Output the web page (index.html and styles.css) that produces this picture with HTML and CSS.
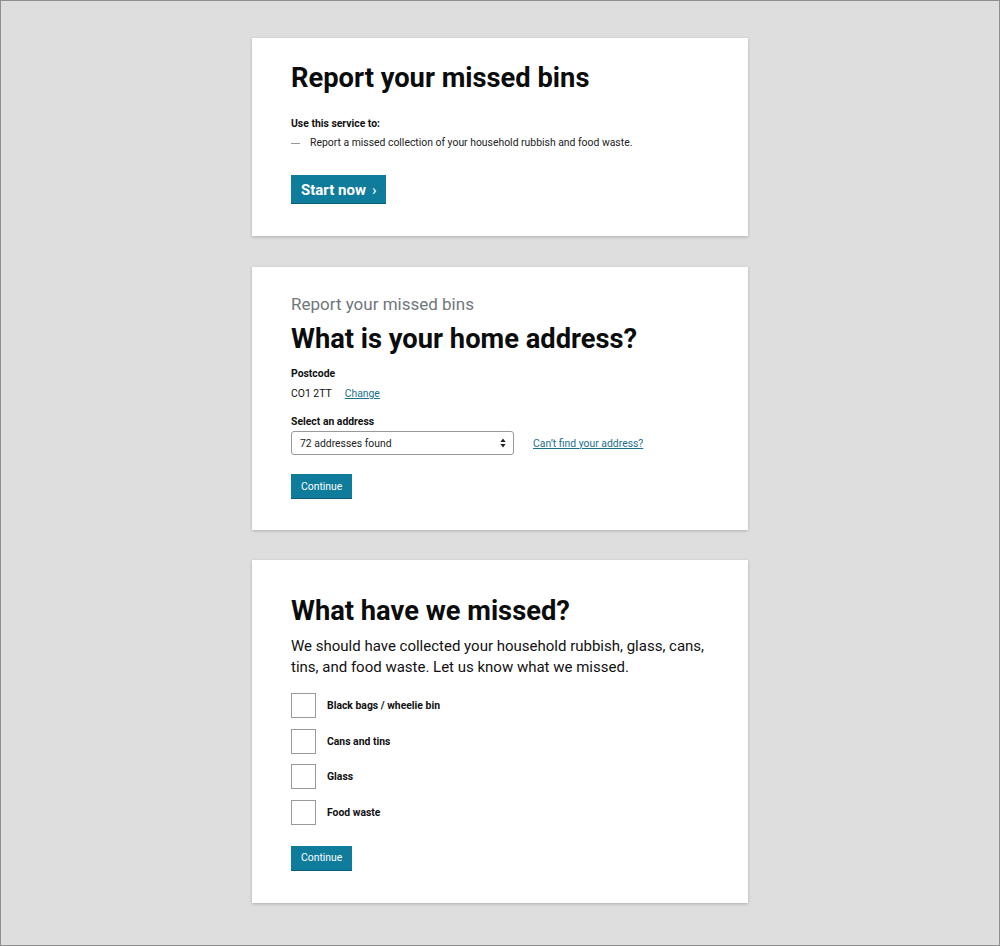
FILE: index.html
```html
<!DOCTYPE html>
<html lang="en">
<head>
<meta charset="utf-8">
<title>Report your missed bins</title>
<link rel="stylesheet" href="styles.css">
</head>
<body>
<div class="frame">
  <section class="card card-start">
    <h1 class="title">Report your missed bins</h1>
    <p class="lead-label">Use this service to:</p>
    <ul class="dash-list">
      <li>Report a missed collection of your household rubbish and food waste.</li>
    </ul>
    <a class="btn btn-start" href="#">Start now <span class="chev">&#x203A;</span></a>
  </section>

  <section class="card card-address">
    <p class="caption">Report your missed bins</p>
    <h1 class="title title-sm">What is your home address?</h1>
    <p class="label">Postcode</p>
    <p class="postcode"><span>CO1 2TT</span><a class="link" href="#">Change</a></p>
    <p class="label label-select">Select an address</p>
    <div class="select-row">
      <div class="select">
        <span>72 addresses found</span>
        <svg class="arrows" width="6" height="10" viewBox="0 0 6 10"><path d="M3 0.5 L5.6 4 H0.4 Z M3 9.5 L5.6 6 H0.4 Z" fill="#222"/></svg>
      </div>
      <a class="link" href="#">Can’t find your address?</a>
    </div>
    <a class="btn btn-small" href="#">Continue</a>
  </section>

  <section class="card card-missed">
    <h1 class="title">What have we missed?</h1>
    <p class="body-text">We should have collected your household rubbish, glass, cans, tins, and food waste. Let us know what we missed.</p>
    <div class="checks">
      <label class="check"><span class="box"></span><span>Black bags / wheelie bin</span></label>
      <label class="check"><span class="box"></span><span>Cans and tins</span></label>
      <label class="check"><span class="box"></span><span>Glass</span></label>
      <label class="check"><span class="box"></span><span>Food waste</span></label>
    </div>
    <a class="btn btn-small" href="#">Continue</a>
  </section>
</div>
</body>
</html>
```

FILE: styles.css
```css
* { box-sizing: border-box; }
html, body { margin: 0; padding: 0; }
body {
  font-family: Roboto, "Liberation Sans", Arial, sans-serif;
  color: #111;
  background: #dedede;
}
.frame {
  width: 1000px;
  height: 946px;
  border: 1px solid #8f8f8f;
  background: #dedede;
  display: flex;
  flex-direction: column;
  align-items: center;
  padding-top: 37px;
}
.card {
  width: 496px;
  background: #fff;
  box-shadow: 0 1px 3px rgba(0,0,0,0.22);
  padding: 0 39px;
}
p { margin: 0; }
.title {
  margin: 0;
  font-size: 27.3px;
  font-weight: 700;
  line-height: 34px;
  color: #0b0c0c;
}
.card-start { height: 198px; padding-top: 23px; }
.lead-label {
  margin-top: 22px;
  font-size: 10.4px;
  font-weight: 700;
  line-height: 14px;
}
.dash-list {
  list-style: none;
  margin: 5px 0 0;
  padding: 0;
  font-size: 10.4px;
  line-height: 14px;
  color: #222;
}
.dash-list li { position: relative; padding-left: 19px; }
.dash-list li::before {
  content: "";
  position: absolute;
  left: 0;
  top: 7px;
  width: 9px;
  height: 1px;
  background: #999;
}
.btn {
  display: inline-flex;
  align-items: center;
  background: #107c9c;
  color: #fff;
  text-decoration: none;
  box-shadow: 0 1px 0 #0b5d76;
}
.btn-start {
  margin-top: 25px;
  height: 28px;
  padding: 2px 10px 0;
  font-size: 15px;
  font-weight: 700;
}
.chev { font-weight: 400; font-size: 15px; margin-left: 6px; line-height: 1; }
.card-address { margin-top: 31px; height: 263px; padding-top: 27px; }
.caption {
  font-size: 17px;
  line-height: 20px;
  color: #6f777b;
}
.title-sm { line-height: 32px; margin-top: 9px; }
.label {
  margin-top: 12px;
  font-size: 10.4px;
  font-weight: 700;
  line-height: 14px;
}
.postcode {
  margin-top: 6px;
  font-size: 10.4px;
  line-height: 14px;
  display: flex;
  gap: 13px;
}
.link { color: #1a6f8c; text-decoration: underline; font-size: 10.4px; }
.label-select { margin-top: 14px; }
.select-row {
  margin-top: 2px;
  display: flex;
  align-items: center;
  gap: 19px;
}
.select {
  width: 223px;
  height: 24px;
  border: 1px solid #999;
  border-radius: 3px;
  display: flex;
  align-items: center;
  justify-content: space-between;
  padding: 0 7px 0 8px;
  font-size: 10.4px;
  color: #222;
}
.btn-small {
  margin-top: 19px;
  height: 24px;
  padding: 0 10px;
  font-size: 10.4px;
}
.card-missed { margin-top: 30px; height: 343px; padding-top: 34px; }
.body-text {
  margin-top: 8px;
  font-size: 15px;
  line-height: 21px;
  color: #111;
}
.checks {
  margin-top: 15px;
  display: flex;
  flex-direction: column;
  gap: 10.67px;
}
.check {
  display: flex;
  align-items: center;
  gap: 11px;
  font-size: 10.4px;
  font-weight: 700;
}
.box {
  width: 25px;
  height: 25px;
  border: 1px solid #9a9a9a;
  background: #fff;
}
.card-missed .btn-small { margin-top: 21px; }
```
